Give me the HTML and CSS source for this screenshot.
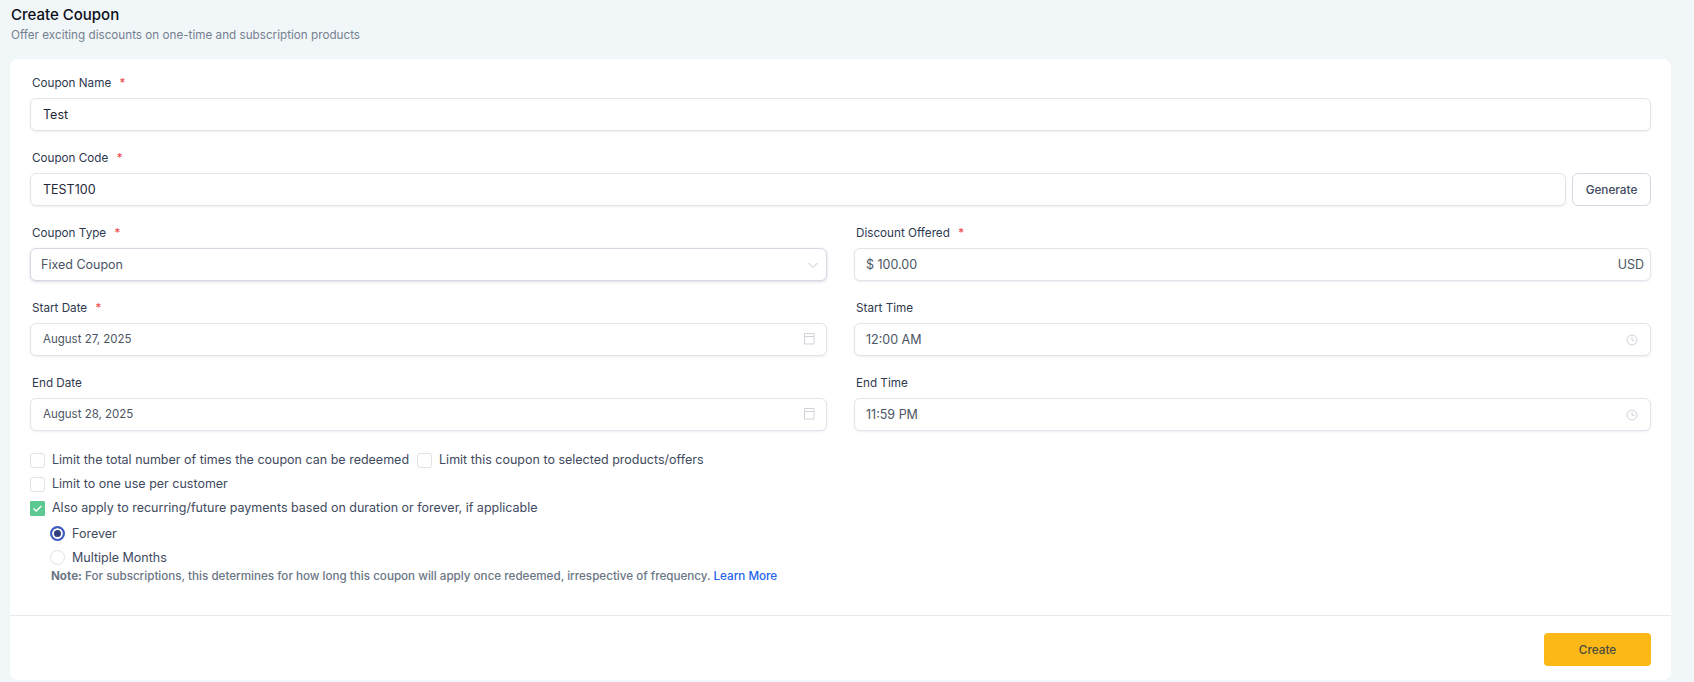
FILE: index.html
```html
<!DOCTYPE html>
<html lang="en">
<head>
<meta charset="utf-8">
<title>Create Coupon</title>
<link rel="stylesheet" href="styles.css">
</head>
<body>
<header class="page-head">
  <h1 class="page-title">Create Coupon</h1>
  <p class="page-sub">Offer exciting discounts on one-time and subscription products</p>
</header>
<main class="card">
  <div class="card-body">
    <div class="field">
      <div class="label">Coupon Name <span class="req">*</span></div>
      <div class="input"><span class="value">Test</span></div>
    </div>
    <div class="field">
      <div class="label">Coupon Code <span class="req">*</span></div>
      <div class="code-row">
        <div class="input grow"><span class="value">TEST100</span></div>
        <div class="btn-outline">Generate</div>
      </div>
    </div>
    <div class="grid">
      <div class="field">
        <div class="label">Coupon Type <span class="req">*</span></div>
        <div class="input select"><span class="value muted">Fixed Coupon</span>
          <svg class="icon" width="12" height="12" viewBox="0 0 12 12"><path d="M1.500 4l4.500 4.500L10.500 4" fill="none" stroke="#c4c8d0" stroke-width="1"/></svg>
        </div>
      </div>
      <div class="field">
        <div class="label">Discount Offered <span class="req">*</span></div>
        <div class="input right"><span class="value muted">$ 100.00</span><span class="suffix">USD</span></div>
      </div>
      <div class="field">
        <div class="label">Start Date <span class="req">*</span></div>
        <div class="input"><span class="value date">August 27, 2025</span>
          <svg class="icon cal" width="12" height="12" viewBox="0 0 12 12"><path d="M1.500 .5h9.500v10.500h-9.500zM1.500 3.500h9.500" fill="none" stroke="#d0d3da" stroke-width="1"/></svg>
        </div>
      </div>
      <div class="field">
        <div class="label">Start Time</div>
        <div class="input right"><span class="value muted">12:00 AM</span>
          <svg class="icon clock" width="12" height="12" viewBox="0 0 12 12"><circle cx="6" cy="6" r="5" fill="none" stroke="#d0d3da"/><path d="M6 3v3.300h2.500" fill="none" stroke="#d0d3da"/></svg>
        </div>
      </div>
      <div class="field">
        <div class="label">End Date</div>
        <div class="input"><span class="value date">August 28, 2025</span>
          <svg class="icon cal" width="12" height="12" viewBox="0 0 12 12"><path d="M1.500 .5h9.500v10.500h-9.500zM1.500 3.500h9.500" fill="none" stroke="#d0d3da" stroke-width="1"/></svg>
        </div>
      </div>
      <div class="field">
        <div class="label">End Time</div>
        <div class="input right"><span class="value muted">11:59 PM</span>
          <svg class="icon clock" width="12" height="12" viewBox="0 0 12 12"><circle cx="6" cy="6" r="5" fill="none" stroke="#d0d3da"/><path d="M6 3v3.300h2.500" fill="none" stroke="#d0d3da"/></svg>
        </div>
      </div>
    </div>
    <div class="options">
      <div class="opt-row">
        <div class="check-item"><span class="box"></span>Limit the total number of times the coupon can be redeemed</div>
        <div class="check-item"><span class="box"></span>Limit this coupon to selected products/offers</div>
      </div>
      <div class="opt-row">
        <div class="check-item"><span class="box"></span>Limit to one use per customer</div>
      </div>
      <div class="opt-row">
        <div class="check-item"><span class="box checked"><svg width="11" height="9" viewBox="0 0 11 9"><path d="M1.500 4.500l2.800 2.500 5-5" fill="none" stroke="#fff" stroke-width="1.400"/></svg></span>Also apply to recurring/future payments based on duration or forever, if applicable</div>
      </div>
      <div class="radios">
        <div class="radio-item"><span class="radio on"></span>Forever</div>
        <div class="radio-item"><span class="radio"></span>Multiple Months</div>
        <p class="note"><strong>Note:</strong> For subscriptions, this determines for how long this coupon will apply once redeemed, irrespective of frequency. <a class="link" href="#">Learn More</a></p>
      </div>
    </div>
  </div>
  <footer class="card-foot">
    <div class="btn-primary">Create</div>
  </footer>
</main>
</body>
</html>
```
FILE: styles.css
```css
* { box-sizing: border-box; }
html, body { margin: 0; height: 682px; overflow: hidden; }
body {
  background: #f1f6f9;
  font-family: Inter, "Liberation Sans", sans-serif;
  color: #3b4252;
}
.page-head { padding: 6px 11px 0; height: 59px; }
.page-title { margin: 0; font-size: 15px; line-height: 18px; font-weight: 500; color: #0b0f19; }
.page-sub { margin: 3px 0 0; font-size: 11.700px; line-height: 16px; color: #75808f; }
.card {
  margin: 0 23px 0 10px;
  height: 621px;
  background: #fff;
  border-radius: 8px;
  display: flex;
  flex-direction: column;
}
.card-body { padding: 15px 20px 0; flex: 1; }
.field { height: 75px; }
.label {
  height: 24px;
  padding-left: 2px;
  font-size: 11.700px;
  line-height: 18px;
  font-weight: 400;
  color: #2f3a50;
  white-space: pre-wrap;
}
.req { color: #ef4444; margin-left: 5px; }
.input {
  height: 33px;
  border: 1px solid #e2e4ec;
  border-radius: 6px;
  background: #fff;
  box-shadow: 0 1px 2px rgba(20, 30, 60, .07);
  display: flex;
  align-items: center;
  justify-content: space-between;
  padding: 0 6px 0 12px;
}
.input.grow { flex: 1; }
.input.right { padding-left: 11px; }
.select { padding-left: 10px; border-color: #d6d9e3; box-shadow: 0 1px 3px rgba(20, 30, 60, .16); padding-right: 7px; }
.value { font-size: 12.500px; line-height: 18px; color: #1f2937; }
.value.muted { color: #4b5563; }
.value.date { font-size: 11.500px; color: #4b5563; margin-bottom: 1px; }
.suffix { font-size: 12.500px; color: #4b5563; }
.icon { flex: none; margin-right: 5px; }
.icon.cal { margin-bottom: 1px; }
.icon.clock { margin-right: 6px; }
.select .icon { margin-right: 0; }
.code-row { display: flex; gap: 6px; }
.btn-outline {
  width: 79px;
  height: 33px;
  border: 1px solid #d4d6e2;
  border-radius: 6px;
  font-size: 11.750px;
  font-weight: 500;
  color: #3f4a5f;
  display: flex;
  align-items: center;
  justify-content: center;
}
.grid { display: grid; grid-template-columns: 797px 797px; column-gap: 27px; }
.options { margin-top: -1px; }
.opt-row { display: flex; gap: 8px; height: 24px; align-items: center; }
.check-item { display: flex; align-items: center; gap: 7px; font-size: 12.500px; line-height: 18px; color: #414a5e; }
.box {
  width: 15px;
  height: 15px;
  flex: none;
  border: 1px solid #dfe2e8;
  border-radius: 3px;
  background: #fff;
  display: flex;
  align-items: center;
  justify-content: center;
}
.box.checked { background: #5cc992; border-color: #5cc992; border-radius: 1px; }
.radios { padding: 1px 0 0 20px; }
.radio-item { display: flex; align-items: center; gap: 7px; height: 24px; font-size: 12.500px; color: #414a5e; }
.radio {
  width: 15px;
  height: 15px;
  flex: none;
  border: 1px solid #dfe2e8;
  border-radius: 50%;
  background: #fff;
}
.radio.on { border: 2px solid #3b5cc4; box-shadow: inset 0 0 0 2px #fff; background: #2f3f7f; }
.note { margin: -1px 0 0; padding-left: 1px; font-size: 11.650px; line-height: 16px; font-weight: 500; color: #6b7685; }
.note strong { font-weight: 700; }
.link { color: #2563eb; text-decoration: none; font-weight: 500; }
.card-foot {
  height: 65px;
  border-top: 1px solid #e8eaee;
  display: flex;
  justify-content: flex-end;
  align-items: flex-start;
  padding: 17px 20px 0 0;
}
.btn-primary {
  width: 107px;
  height: 33px;
  border-radius: 4px;
  background: #fbb816;
  font-size: 11.750px;
  font-weight: 500;
  color: #4a4a3f;
  display: flex;
  align-items: center;
  justify-content: center;
}
```
